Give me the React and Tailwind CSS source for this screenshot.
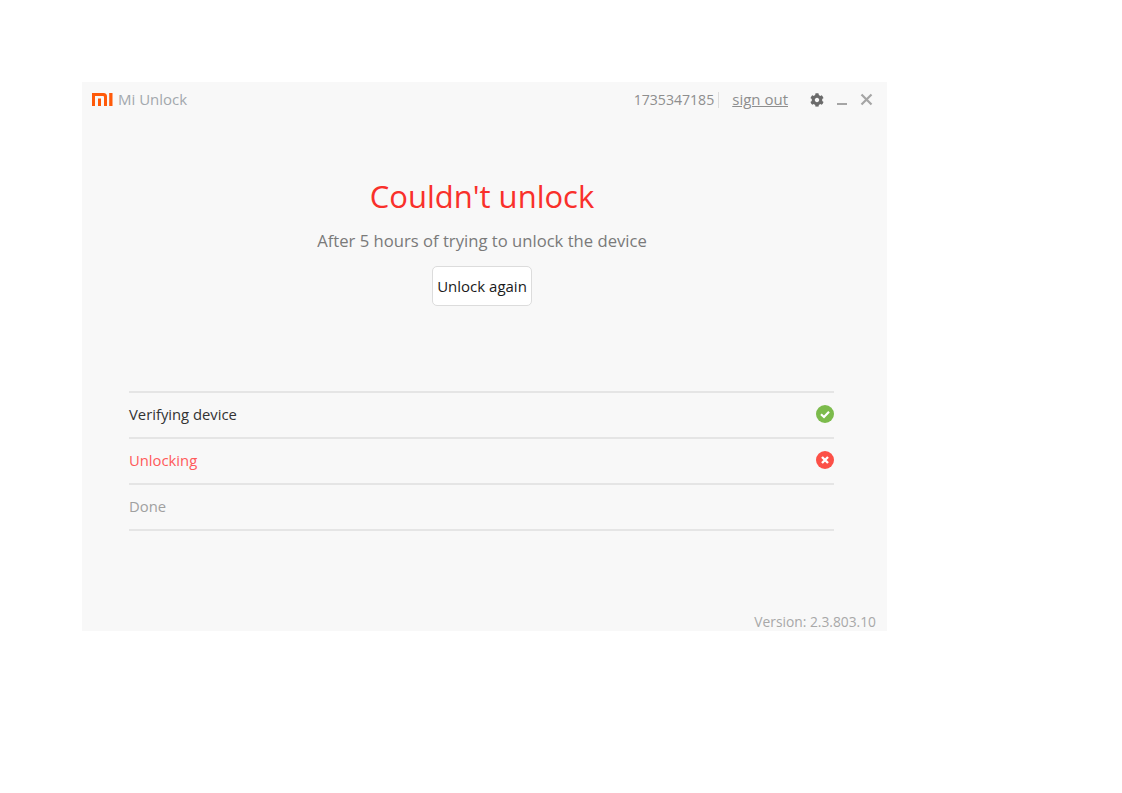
import { FaCog } from "react-icons/fa";

function MiLogo() {
  return (
    <svg width="21" height="13" viewBox="0 0 21 13" className="block">
      <path d="M0 0H11.5Q15 0 15 3.5V13H12V4Q12 3 11 3H3V13H0Z" fill="#ff5a0a" />
      <rect x="6" y="5.5" width="3" height="7.5" fill="#ff5a0a" />
      <rect x="17.2" y="0" width="3.3" height="13" fill="#ff5a0a" />
    </svg>
  );
}

function StepRow({ label, color, icon }) {
  return (
    <div className={`flex h-[46px] items-center justify-between border-b-2 border-[#e5e5e5] pb-[1px] text-[14.8px] ${color}`}>
      <span>{label}</span>
      {icon}
    </div>
  );
}

export default function App() {
  return (
    <div className="min-h-screen bg-white pl-[82px] pt-[82px] font-['Open_Sans',sans-serif]">
      <div className="flex h-[549px] w-[805px] flex-col bg-[#f8f8f8]">
        <div className="flex h-[35px] items-center justify-between pl-[10px] pr-[13px]">
          <div className="flex items-center gap-[5px] text-[15px] text-[#a3a8ad]">
            <MiLogo />
            <span>Mi Unlock</span>
          </div>
          <div className="flex items-center text-[#8e8e8e]">
            <span className="border-r border-[#ddd] pr-[4px] text-[14.1px] leading-[16px]">1735347185</span>
            <span className="ml-[13px] text-[15px] underline">sign out</span>
            <FaCog size={14} className="ml-[22px] text-[#6b6b6b]" />
            <span className="ml-[13px] mt-[8px] h-[2px] w-[10px] bg-[#a5a5a5]" />
            <svg width="14" height="14" viewBox="0 0 14 14" className="ml-[13px]">
              <path d="M1.5 1.5L11.5 11.5M11.5 1.5L1.5 11.5" stroke="#a5a5a5" strokeWidth="2.2" />
            </svg>
          </div>
        </div>

        <div className="flex flex-col items-center pr-[5px]">
          <h1 className="mt-[53px] text-[31px] leading-[52px] text-[#f9302b]">Couldn't unlock</h1>
          <p className="mt-[6px] text-[16.65px] leading-[26px] text-[#7a7a7a]">After 5 hours of trying to unlock the device</p>
          <button className="mt-[12px] h-[40px] w-[100px] rounded-[5px] border border-[#dcdcdc] bg-white text-[15px] text-[#1a1a1a]">
            Unlock again
          </button>
        </div>

        <div className="mx-[47px] mt-[85px] w-[705px] border-t-2 border-[#e5e5e5]">
          <StepRow
            label="Verifying device"
            color="text-[#333]"
            icon={
              <svg width="18" height="18" viewBox="0 0 18 18" className="mb-[1px]">
                <circle cx="9" cy="9" r="9" fill="#7cbb4c" />
                <path d="M5 9.2L8 12L13 6.8" fill="none" stroke="#fff" strokeWidth="2.2" />
              </svg>
            }
          />
          <StepRow
            label="Unlocking"
            color="text-[#ff5a5a]"
            icon={
              <svg width="18" height="18" viewBox="0 0 18 18" className="mb-[1px]">
                <circle cx="9" cy="9" r="9" fill="#fc5047" />
                <path d="M6 6L12 12M12 6L6 12" stroke="#fff" strokeWidth="2.4" />
              </svg>
            }
          />
          <StepRow label="Done" color="text-[#a0a0a0]" />
        </div>

        <div className="mt-auto pr-[11px] text-right text-[13.8px] leading-[18px] text-[#a8a8a8]">Version: 2.3.803.10</div>
      </div>
    </div>
  );
}
